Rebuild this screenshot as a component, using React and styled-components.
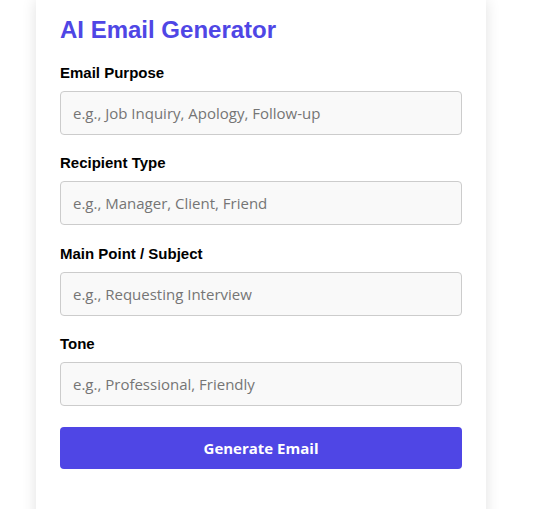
import React from "react";
import styled, { createGlobalStyle } from "styled-components";

const GlobalStyle = createGlobalStyle`
  html, body {
    margin: 0;
    padding: 0;
    background: #ffffff;
    overflow: hidden;
  }
  * {
    box-sizing: border-box;
  }
`;

const Page = styled.div`
  display: flex;
  align-items: flex-start;
  padding-left: 36px;
  height: 509px;
`;

const Card = styled.form`
  width: 450px;
  min-height: 540px;
  padding: 16px 24px 60px;
  background: #ffffff;
  box-shadow: 0 0 14px rgba(0, 0, 0, 0.12);
`;

const Title = styled.h2`
  margin: 0 0 20px;
  font-family: "Liberation Sans", Arial, sans-serif;
  font-size: 24px;
  font-weight: 700;
  color: #4f46e5;
`;

const Field = styled.div`
  display: flex;
  flex-direction: column;
  margin-bottom: ${(p) => (p.last ? "21px" : "19.34px")};
`;

const Label = styled.label`
  display: block;
  margin-bottom: 10px;
  font-family: "Liberation Sans", Arial, sans-serif;
  font-size: 15px;
  line-height: 17px;
  font-weight: 700;
  color: #000000;
`;

const Input = styled.input`
  width: 100%;
  height: 44px;
  padding: 0 12px;
  border: 1px solid #cccccc;
  border-radius: 4px;
  background: #f9f9f9;
  font-family: "Open Sans", sans-serif;
  font-size: 15px;
  color: #222222;
  outline: none;

  &::placeholder {
    color: #757575;
  }
`;

const Button = styled.button`
  width: 100%;
  height: 42px;
  border: none;
  border-radius: 4px;
  background: #4f46e5;
  color: #ffffff;
  font-family: "Open Sans", sans-serif;
  font-size: 15px;
  font-weight: 700;
  cursor: pointer;
`;

const fields = [
  { id: "purpose", label: "Email Purpose", placeholder: "e.g., Job Inquiry, Apology, Follow-up" },
  { id: "recipient", label: "Recipient Type", placeholder: "e.g., Manager, Client, Friend" },
  { id: "subject", label: "Main Point / Subject", placeholder: "e.g., Requesting Interview" },
  { id: "tone", label: "Tone", placeholder: "e.g., Professional, Friendly" },
];

const App = () => (
  <>
    <GlobalStyle />
    <Page>
      <Card onSubmit={(e) => e.preventDefault()}>
        <Title>AI Email Generator</Title>
        {fields.map((f, i) => (
          <Field key={f.id} last={i === fields.length - 1}>
            <Label htmlFor={f.id}>{f.label}</Label>
            <Input id={f.id} placeholder={f.placeholder} />
          </Field>
        ))}
        <Button type="submit">Generate Email</Button>
      </Card>
    </Page>
  </>
);

export default App;
